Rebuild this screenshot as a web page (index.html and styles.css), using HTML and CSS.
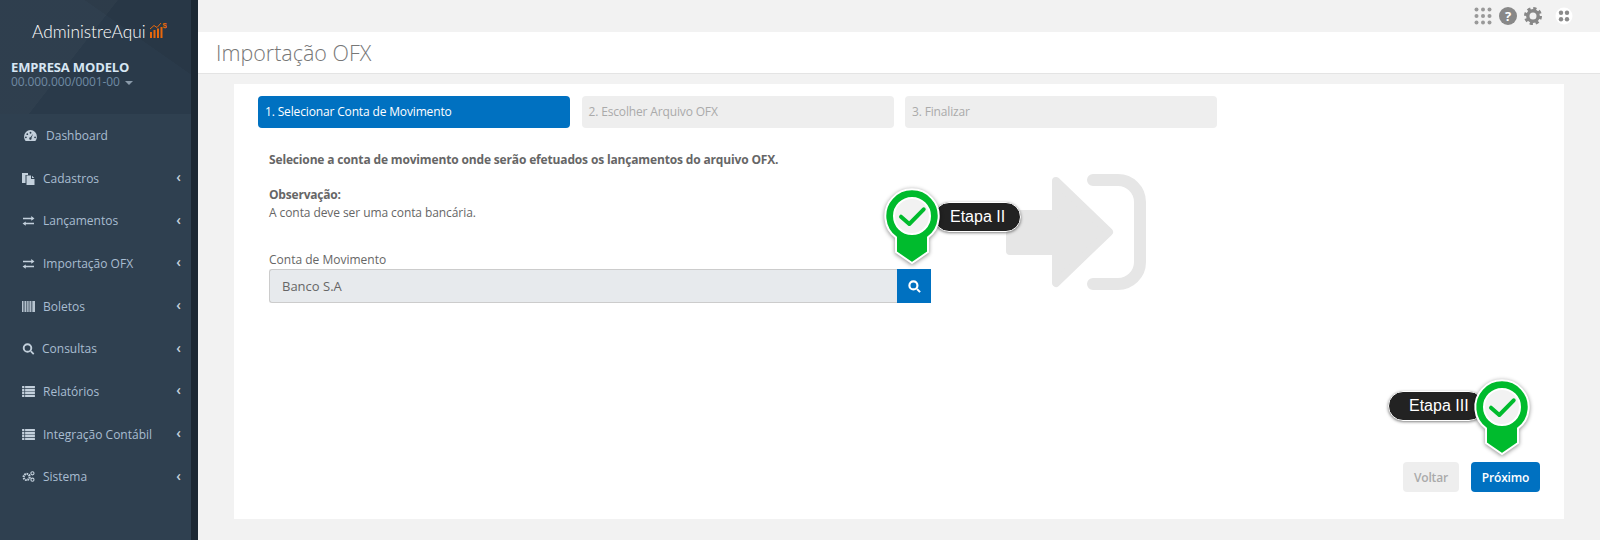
FILE: index.html
```html
<!DOCTYPE html>
<html lang="pt-BR">
<head>
  <meta charset="UTF-8" />
  <title>Importação OFX</title>
  <link rel="stylesheet" href="styles.css">
</head>
<body>
  <svg class="defs" width="0" height="0">
    <symbol id="i-exchange" viewBox="0 0 14 12"><path d="M1 3h9V1l3.500 2.800L10 6.400V4.500H1zM13 8.500H4V7L.5 9.300 4 11.800v-1.800h9z"/></symbol>
    <symbol id="i-list" viewBox="0 0 14 12"><path d="M0 0h2.500v2.400H0zM3.300 0H14v2.400H3.300zM0 3.200h2.500v2.400H0zM3.300 3.200H14v2.400H3.300zM0 6.400h2.500v2.400H0zM3.300 6.400H14v2.400H3.300zM0 9.600h2.500V12H0zM3.300 9.600H14V12H3.300z"/></symbol>
    <symbol id="i-pin" viewBox="0 0 60 80">
      <path class="pin-body" d="M14 49.400A26.700 26.700 0 1 1 46 49.400V64L30 75 14 64Z"/>
      <circle class="pin-face" cx="30" cy="28" r="18"/>
      <path class="pin-check" d="M19 28.700 27.300 36 41.700 21.300"/>
    </symbol>
  </svg>

  <div class="app">
    <aside class="sidebar">
      <div class="side-head">
        <div class="logo">
          <span>AdministreAqui</span>
          <svg class="logo-icon" viewBox="0 0 18 18" width="18" height="18">
            <path fill="#e8670c" d="M1 11h2v6H1zM4.500 9h2v8h-2zM8 7.500h2V17H8zM11.500 6h2v11h-2z"/>
            <path fill="none" stroke="#e8670c" stroke-width="1" d="M1 8 5 4.500 8 6.500 12 2"/>
            <text x="13.500" y="6.500" class="logo-dollar">$</text>
          </svg>
        </div>
        <div class="company">EMPRESA MODELO</div>
        <div class="cnpj">00.000.000/0001-00 <i class="caret"></i></div>
      </div>

      <nav class="menu">
        <a class="menu-item">
          <svg class="ico ico-dash" viewBox="0 0 14 12"><path fill-rule="evenodd" d="M7 0a7 7 0 0 1 7 7c0 2-.6 3.700-1.700 5H1.700C.6 10.700 0 9 0 7a7 7 0 0 1 7-7ZM7 2a1 1 0 1 0 0 2 1 1 0 0 0 0-2ZM3.500 3.500a1 1 0 1 0 0 2 1 1 0 0 0 0-2ZM2 7a1 1 0 1 0 0 2 1 1 0 0 0 0-2ZM12 7a1 1 0 1 0 0 2 1 1 0 0 0 0-2ZM9.800 4 7 8a1.300 1.300 0 1 0 1 .6Z"/></svg>
          <span>Dashboard</span>
        </a>
        <a class="menu-item">
          <svg class="ico ico-files" viewBox="0 0 13 13"><path d="M0 1h6v2H3.500v8H0zM4.500 3.500H9V7h3.500v6h-8zM10 3.700 12.300 6H10z"/></svg>
          <span>Cadastros</span><b class="chev">‹</b>
        </a>
        <a class="menu-item">
          <svg class="ico"><use href="#i-exchange"/></svg>
          <span>Lançamentos</span><b class="chev">‹</b>
        </a>
        <a class="menu-item">
          <svg class="ico"><use href="#i-exchange"/></svg>
          <span>Importação OFX</span><b class="chev">‹</b>
        </a>
        <a class="menu-item">
          <svg class="ico" viewBox="0 0 14 12"><path d="M0 0h1v12H0zM1.600 0h1v12h-1zM3.300 0h1.200v12H3.300zM5.200 0h1v12h-1zM6.900 0h1.200v12H6.900zM8.800 0h1v12h-1zM10.500 0h1v12h-1zM12 0h2v12h-2z"/></svg>
          <span>Boletos</span><b class="chev">‹</b>
        </a>
        <a class="menu-item menu-item-tight">
          <svg class="ico ico-search" viewBox="0 0 12 12"><circle cx="5" cy="5" r="3.800" fill="none" stroke="currentColor" stroke-width="1.900"/><path d="M7.700 8.800 8.900 7.600 11.800 10.500 10.600 11.700Z"/></svg>
          <span>Consultas</span><b class="chev">‹</b>
        </a>
        <a class="menu-item">
          <svg class="ico"><use href="#i-list"/></svg>
          <span>Relatórios</span><b class="chev">‹</b>
        </a>
        <a class="menu-item">
          <svg class="ico"><use href="#i-list"/></svg>
          <span>Integração Contábil</span><b class="chev">‹</b>
        </a>
        <a class="menu-item">
          <svg class="ico" viewBox="0 0 14 12"><circle cx="5" cy="6.500" r="3.300" fill="none" stroke="currentColor" stroke-width="2.400" stroke-dasharray="1.700 .8"/><circle cx="11.300" cy="2.500" r="1.700" fill="none" stroke="currentColor" stroke-width="1.200"/><circle cx="11.300" cy="9.500" r="1.700" fill="none" stroke="currentColor" stroke-width="1.200"/></svg>
          <span>Sistema</span><b class="chev">‹</b>
        </a>
      </nav>
    </aside>

    <div class="main">
      <div class="topbar">
        <svg class="top-ico" viewBox="0 0 18 18" width="18" height="18"><g fill="#999"><circle cx="2.500" cy="2.500" r="2"/><circle cx="9" cy="2.500" r="2"/><circle cx="15.500" cy="2.500" r="2"/><circle cx="2.500" cy="9" r="2"/><circle cx="9" cy="9" r="2"/><circle cx="15.500" cy="9" r="2"/><circle cx="2.500" cy="15.500" r="2"/><circle cx="9" cy="15.500" r="2"/><circle cx="15.500" cy="15.500" r="2"/></g></svg>
        <span class="help">?</span>
        <svg class="top-ico" viewBox="0 0 18 18" width="18" height="18"><circle cx="9" cy="9" r="5.200" fill="none" stroke="#888" stroke-width="3.400"/><circle cx="9" cy="9" r="7.500" fill="none" stroke="#888" stroke-width="3" stroke-dasharray="3.200 2.690"/></svg>
        <svg class="top-ico top-avatar" viewBox="0 0 18 18" width="18" height="18"><circle cx="9" cy="9" r="8.500" fill="#fff"/><g fill="#8a8a8a"><circle cx="6" cy="5.800" r="2.200"/><circle cx="12" cy="5.800" r="2.200"/><circle cx="6" cy="12.200" r="2.200"/><circle cx="12" cy="12.200" r="2.200"/></g></svg>
      </div>

      <h1 class="page-title">Importação OFX</h1>

      <section class="card">
        <!-- marca d'agua -->
        <svg class="watermark" viewBox="0 0 140 116" width="140" height="116">
          <path fill="#e6e6e6" stroke="#e6e6e6" stroke-width="8" stroke-linejoin="round" d="M4 40H50V7L103 58 50 109V77H4Z"/>
          <path fill="none" stroke="#e6e6e6" stroke-width="12" stroke-linecap="round" stroke-linejoin="round" d="M87 6H112A22 22 0 0 1 134 28V88A22 22 0 0 1 112 110H87"/>
        </svg>

        <div class="steps">
          <div class="step active">1. Selecionar Conta de Movimento</div>
          <div class="step">2. Escolher Arquivo OFX</div>
          <div class="step">3. Finalizar</div>
        </div>

        <div class="form">
          <p class="lead">Selecione a conta de movimento onde serão efetuados os lançamentos do arquivo OFX.</p>
          <p class="note"><strong>Observação:</strong><br>A conta deve ser uma conta bancária.</p>
          <label class="field-label">Conta de Movimento</label>
          <div class="input-group">
            <div class="input">Banco S.A</div>
            <button class="search-btn">
              <svg viewBox="0 0 12 12" width="13" height="13"><circle cx="5" cy="5" r="3.700" fill="none" stroke="#fff" stroke-width="2"/><path fill="#fff" d="M7.600 8.900 8.900 7.600 11.800 10.500 10.500 11.800Z"/></svg>
            </button>
          </div>
        </div>

        <div class="actions">
          <button class="btn btn-off">Voltar</button>
          <button class="btn btn-next">Próximo</button>
        </div>

        <div class="marker marker-two">
          <svg class="pin"><use href="#i-pin"/></svg>
          <span class="tag">Etapa II</span>
        </div>
        <div class="marker marker-three">
          <span class="tag">Etapa III</span>
          <svg class="pin"><use href="#i-pin"/></svg>
        </div>
      </section>
    </div>
  </div>
</body>
</html>
```

FILE: styles.css
```css
* {
  box-sizing: border-box;
}

html, body {
  margin: 0;
  height: 100%;
  overflow: hidden;
}

body {
  font-family: "Open Sans", Arial, sans-serif;
  font-size: 12px;
  color: #666;
  background: #f2f2f2;
}

.defs {
  position: absolute;
}

.app {
  display: flex;
  height: 540px;
}

/* sidebar */
.sidebar {
  width: 198px;
  flex-shrink: 0;
  background: #2f4050;
  border-right: 7px solid #1c2833;
}

.side-head {
  height: 114px;
  padding: 20px 0 0 11px;
  background:
    linear-gradient(128deg, rgba(255,255,255,.025) 0 42%, transparent 42.200%),
    linear-gradient(215deg, rgba(0,0,0,.06) 0 30%, transparent 30.200%),
    #2a3a4a;
}

.logo {
  display: flex;
  align-items: center;
  gap: 3px;
  margin-left: 21px;
  height: 22px;
  color: #fff;
  font-family: Lato, "Open Sans", sans-serif;
  font-size: 17.300px;
  font-weight: 300;
}

.logo-icon {
  margin-top: -2px;
}

.logo-dollar {
  fill: #e8670c;
  font-family: "Liberation Sans", sans-serif;
  font-size: 8px;
  font-weight: bold;
}

.company {
  margin-top: 18px;
  color: #d7e6f3;
  font-size: 13px;
  font-weight: 700;
  letter-spacing: -.15px;
  line-height: 15px;
}

.cnpj {
  color: #6f8aa3;
  font-size: 12px;
  letter-spacing: -.1px;
  line-height: 14px;
}

.caret {
  display: inline-block;
  margin-left: 2px;
  vertical-align: middle;
  border-top: 4px solid #8a9aaa;
  border-left: 4px solid transparent;
  border-right: 4px solid transparent;
}

.menu-item {
  display: flex;
  align-items: center;
  height: 42.700px;
  padding: 0 10px 0 22px;
  color: #a9bdd1;
  font-size: 12px;
  font-weight: 400;
}

.menu-item-tight .ico {
  margin-right: 7px;
}

.ico {
  width: 13px;
  height: 11px;
  margin-right: 8px;
  fill: #c3d0dc;
  color: #c3d0dc;
  flex-shrink: 0;
}

.ico-dash {
  margin-left: 2px;
  margin-right: 9px;
}

.ico-files {
  height: 13px;
}

.ico-search {
  height: 12px;
}

.chev {
  margin: -2px 0 0 auto;
  font-size: 14px;
  font-weight: 600;
  line-height: 1;
  color: #c3d0dc;
}

/* main */
.main {
  flex: 1;
  min-width: 0;
  display: flex;
  flex-direction: column;
}

.topbar {
  height: 32px;
  display: flex;
  align-items: center;
  justify-content: flex-end;
  gap: 7px;
  padding-right: 27px;
}

.top-avatar {
  margin-left: 6px;
}

.help {
  width: 18px;
  height: 18px;
  border-radius: 50%;
  background: #888;
  color: #fff;
  font-size: 13px;
  font-weight: 700;
  line-height: 18px;
  text-align: center;
}

.page-title {
  margin: 0;
  height: 42px;
  padding: 0 18px;
  background: #fff;
  border-bottom: 1px solid #e4e4e4;
  color: #777;
  font-size: 21.500px;
  font-weight: 300;
  line-height: 41px;
}

.card {
  position: relative;
  flex: 1;
  display: flex;
  flex-direction: column;
  margin: 10px 36px 21px;
  padding: 12px 24px 27px;
  background: #fff;
}

.watermark {
  position: absolute;
  left: 772px;
  top: 90px;
}

.steps {
  display: flex;
  gap: 11.500px;
}

.step {
  width: 312px;
  height: 32px;
  padding-left: 7px;
  border-radius: 4px;
  background: #eee;
  color: #aaa;
  font-size: 12px;
  letter-spacing: -.15px;
  line-height: 32px;
}

.step.active {
  background: #0071c1;
  color: #fff;
}

.form {
  position: relative;
  width: 673px;
  padding-left: 11px;
  flex: 1;
}

.lead {
  margin: 23px 0 0;
  font-weight: 700;
  letter-spacing: -.155px;
  line-height: 18px;
}

.note {
  margin: 17px 0 0;
  letter-spacing: -.08px;
  line-height: 18px;
}

.note strong {
  letter-spacing: -.2px;
}

.field-label {
  display: block;
  margin-top: 29px;
  line-height: 18px;
  color: #666;
}

.input-group {
  display: flex;
  height: 34px;
}

.input {
  flex: 1;
  padding-left: 12px;
  background: #e7eaed;
  border: 1px solid #ccc;
  border-right: 0;
  border-radius: 3px 0 0 3px;
  color: #666;
  font-size: 13px;
  line-height: 32px;
}

.search-btn {
  width: 34px;
  padding: 0;
  border: 0;
  background: #0071c1;
  display: flex;
  align-items: center;
  justify-content: center;
}

.actions {
  display: flex;
  justify-content: flex-end;
  gap: 12px;
}

.btn {
  height: 30px;
  padding: 0;
  border: 0;
  border-radius: 4px;
  font-family: inherit;
  font-size: 12px;
  font-weight: 600;
  letter-spacing: -.15px;
}

.btn-off {
  width: 56px;
  background: #eee;
  color: #aaa;
}

.btn-next {
  width: 69px;
  background: #0071c1;
  color: #fff;
}

/* marcadores das etapas */
.marker {
  position: absolute;
  display: flex;
  align-items: flex-start;
}

.marker-two {
  left: 648px;
  top: 104px;
}

.marker-three {
  left: 1154px;
  top: 295px;
}

.pin {
  position: relative;
  width: 60px;
  height: 80px;
  flex-shrink: 0;
  filter: drop-shadow(0 1px 2px rgba(0,0,0,.45));
}

.pin-body {
  fill: #00bb2d;
  stroke: #fff;
  stroke-width: 2;
}

.pin-face {
  fill: #f2f2f2;
  stroke: #fff;
  stroke-width: 2;
}

.pin-check {
  fill: none;
  stroke: #00bb2d;
  stroke-width: 4;
  stroke-linecap: round;
  stroke-linejoin: round;
}

.tag {
  height: 30px;
  border: 1.500px solid #fff;
  border-radius: 15px;
  background: #222;
  color: #fff;
  font-family: "Liberation Sans", Arial, sans-serif;
  font-size: 16px;
  line-height: 27px;
  box-shadow: 0 1px 3px rgba(0,0,0,.5);
  white-space: nowrap;
}

.marker-two .tag {
  margin: 14px 0 0 -8px;
  padding: 0 15px 0 15px;
}

.marker-three .tag {
  width: 96px;
  margin: 12px -12px 0 0;
  padding-left: 20px;
}
```
